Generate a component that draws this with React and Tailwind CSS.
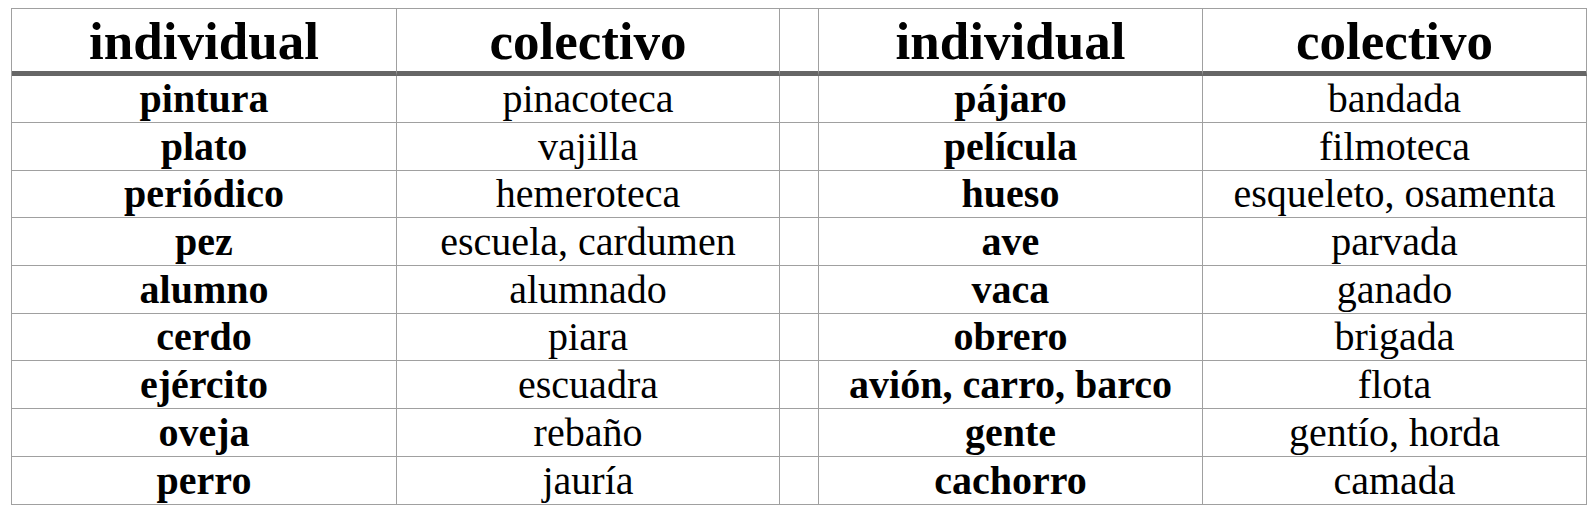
import React from "react";

const left = [
  ["pintura", "pinacoteca"],
  ["plato", "vajilla"],
  ["periódico", "hemeroteca"],
  ["pez", "escuela, cardumen"],
  ["alumno", "alumnado"],
  ["cerdo", "piara"],
  ["ejército", "escuadra"],
  ["oveja", "rebaño"],
  ["perro", "jauría"],
];
const right = [
  ["pájaro", "bandada"],
  ["película", "filmoteca"],
  ["hueso", "esqueleto, osamenta"],
  ["ave", "parvada"],
  ["vaca", "ganado"],
  ["obrero", "brigada"],
  ["avión, carro, barco", "flota"],
  ["gente", "gentío, horda"],
  ["cachorro", "camada"],
];

const cell = "border-r border-b border-[#a0a0a0] flex items-center justify-center whitespace-nowrap";
const head = "border-r border-b-[5px] border-r-[#a0a0a0] border-b-[#666666] flex items-center justify-center font-bold text-[53px] leading-none pt-[2px]";

export default function App() {
  return (
    <div className="bg-white w-[1595px] h-[515px] pt-[8px] pl-[11px] font-['Liberation_Serif','Times_New_Roman',serif]">
      <div className="grid grid-cols-[385px_383px_39px_384px_384px] grid-rows-[67px_47px_48px_47px_48px_48px_47px_48px_48px_48px] w-[1576px] border-l border-t border-[#a0a0a0] text-black">
        <div className={head}>individual</div>
        <div className={head}>colectivo</div>
        <div className={head}></div>
        <div className={head}>individual</div>
        <div className={head}>colectivo</div>
        {left.map((l, i) => (
          <React.Fragment key={i}>
            <div className={cell + " font-bold text-[40px] leading-none"}>{l[0]}</div>
            <div className={cell + " text-[40px] leading-none"}>{l[1]}</div>
            <div className={cell}></div>
            <div className={cell + " font-bold text-[40px] leading-none"}>{right[i][0]}</div>
            <div className={cell + " text-[40px] leading-none"}>{right[i][1]}</div>
          </React.Fragment>
        ))}
      </div>
    </div>
  );
}
